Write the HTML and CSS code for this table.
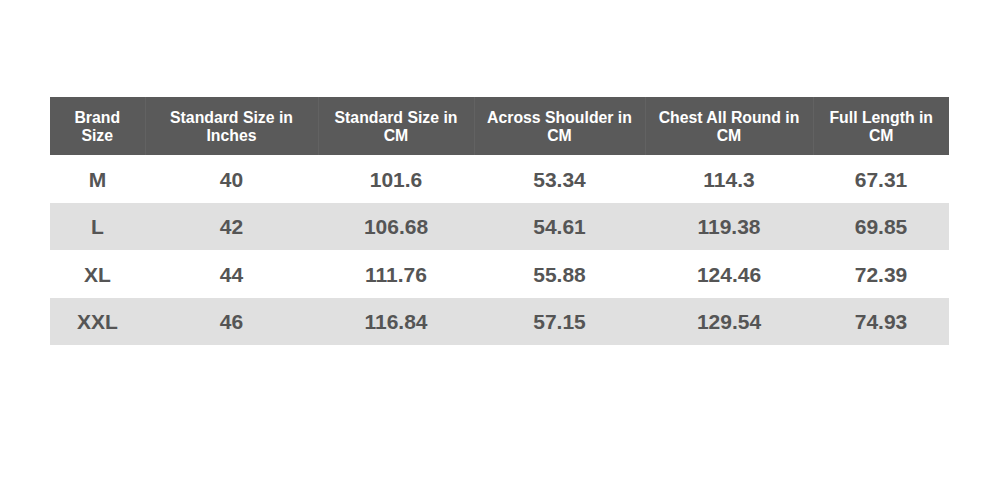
FILE: index.html
```
<!DOCTYPE html>
<html>
<head>
<meta charset="utf-8">
<link rel="stylesheet" href="styles.css">
</head>
<body>
<div class="page">
<table class="sizes">
<colgroup>
<col class="c1"><col class="c2"><col class="c3"><col class="c4"><col class="c5"><col class="c6">
</colgroup>
<thead>
<tr><th>Brand<br>Size</th><th>Standard Size in<br>Inches</th><th>Standard Size in<br>CM</th><th>Across Shoulder in<br>CM</th><th>Chest All Round in<br>CM</th><th>Full Length in<br>CM</th></tr>
</thead>
<tbody>
<tr><td>M</td><td>40</td><td>101.6</td><td>53.34</td><td>114.3</td><td>67.31</td></tr>
<tr class="alt"><td>L</td><td>42</td><td>106.68</td><td>54.61</td><td>119.38</td><td>69.85</td></tr>
<tr><td>XL</td><td>44</td><td>111.76</td><td>55.88</td><td>124.46</td><td>72.39</td></tr>
<tr class="alt"><td>XXL</td><td>46</td><td>116.84</td><td>57.15</td><td>129.54</td><td>74.93</td></tr>
</tbody>
</table>
</div>
</body>
</html>
```
FILE: styles.css
```
html, body { margin: 0; padding: 0; background: #fff; }
.page { padding: 97px 0 0 50px; font-family: "Liberation Sans", Arial, sans-serif; }
.sizes { border-collapse: collapse; width: 899px; table-layout: fixed; }
.c1 { width: 95px; } .c2 { width: 173px; } .c3 { width: 156px; }
.c4 { width: 171px; } .c5 { width: 168px; } .c6 { width: 136px; }
.sizes th { background: #5a5a5a; color: #fff; font-weight: bold; font-size: 15.8px; line-height: 18px; height: 58px; padding: 1px 0 0; box-sizing: border-box; text-align: center; vertical-align: middle; border-left: 1px solid #626262; }
.sizes th:first-child { border-left: none; }
.sizes td { height: 47.5px; padding: 2px 0 0; box-sizing: border-box; text-align: center; vertical-align: middle; font-weight: bold; font-size: 21px; color: #555; }
.sizes tr.alt td { background: #e0e0e0; }
```
